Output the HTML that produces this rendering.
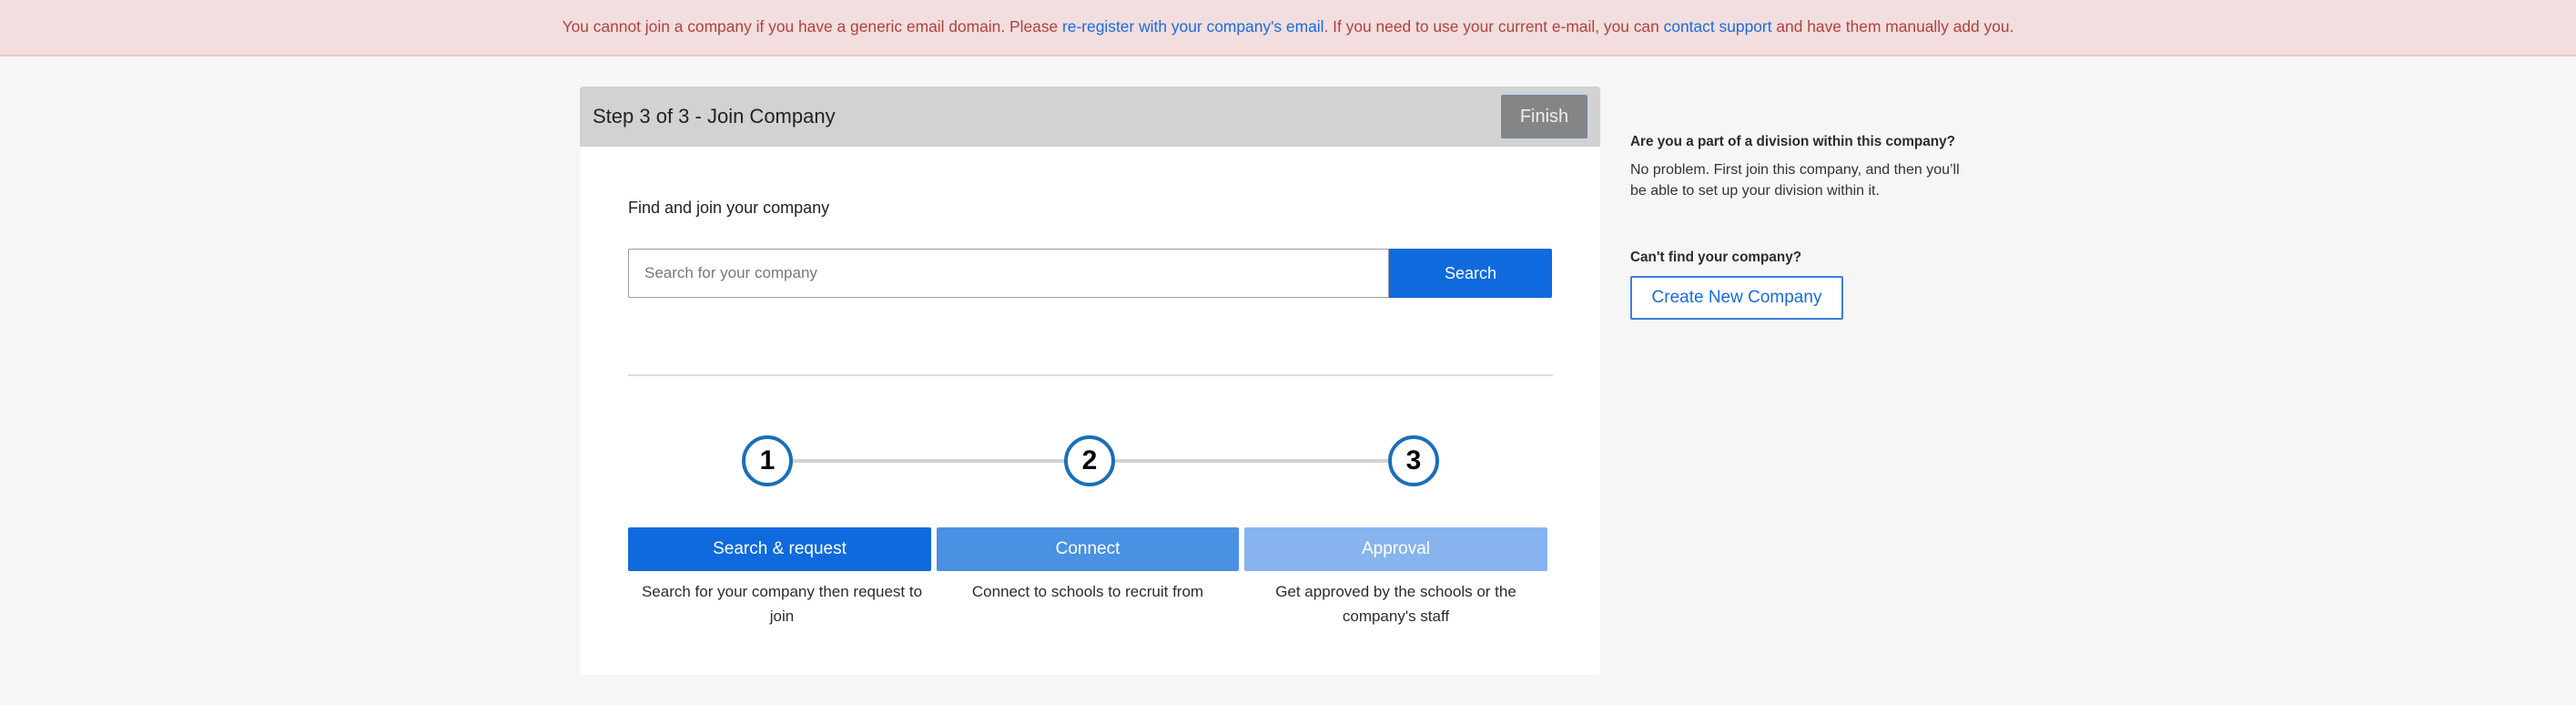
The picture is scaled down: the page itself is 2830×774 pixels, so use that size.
<!DOCTYPE html>
<html><head><meta charset="utf-8"><style>
*{box-sizing:border-box;margin:0;padding:0}
body{width:2830px;height:774px;background:#f6f6f6;font-family:"Liberation Sans",Arial,sans-serif;position:relative;overflow:hidden;color:#2b2b2b}
.banner{position:absolute;left:0;top:0;width:2830px;height:62px;background:#f2dede;border-bottom:2px solid #ebccd1;color:#b0413e;font-size:17.4px;text-align:center;line-height:58px}
.banner a{color:#1a6adf;text-decoration:none}
.card{position:absolute;left:637px;top:95px;width:1121px;height:646px;background:#fff;border-radius:3px;overflow:hidden}
.head{height:66px;background:#d2d2d2;position:relative}
.head .t{position:absolute;left:14px;top:0;line-height:66px;font-size:22px;color:#222}
.finish{position:absolute;left:1012px;top:9px;width:95px;height:48px;background:#858585;border:1px solid #6a88b8;border-radius:2px;color:#eee;font-size:20px;line-height:46px;text-align:center}
.abs{position:absolute}
.circle{position:absolute;width:56px;height:56px;border:4px solid #1a6fb8;border-radius:50%;background:#fff;text-align:center;line-height:48px;font-size:30px;font-weight:bold;color:#000;top:383px}
.btn{position:absolute;top:484px;height:48px;color:#fff;font-size:19px;text-align:center;line-height:48px;border-radius:2px;width:333px}
.desc{position:absolute;top:541px;width:340px;text-align:center;font-size:17px;line-height:27px;color:#2b2b2b}
</style></head><body>
<div class="banner">You cannot join a company if you have a generic email domain. Please <a>re-register with your company's email</a>. If you need to use your current e-mail, you can <a>contact support</a> and have them manually add you.</div>
<div class="card">
 <div class="head"><div class="t">Step 3 of 3 - Join Company</div><div class="finish">Finish</div></div>
 <div class="abs" style="left:53px;top:120px;font-size:18px;line-height:26px;color:#222">Find and join your company</div>
 <div class="abs" style="left:53px;top:178px;width:836px;height:54px;border:1px solid #9a9a9a;border-radius:2px 0 0 2px;font-size:17px;color:#777;line-height:52px;padding-left:17px">Search for your company</div>
 <div class="abs" style="left:889px;top:178px;width:179px;height:54px;background:#0f6ade;border-radius:0 2px 2px 0;color:#fff;font-size:18px;line-height:54px;text-align:center">Search</div>
 <div class="abs" style="left:53px;top:316px;width:1016px;height:2px;background:#dedede"></div>
 <div class="abs" style="left:206px;top:409px;width:710px;height:4px;background:#d3d3d3"></div>
 <div class="circle" style="left:178px">1</div>
 <div class="circle" style="left:532px">2</div>
 <div class="circle" style="left:888px">3</div>
 <div class="btn" style="left:53px;background:#0f6ade">Search &amp; request</div>
 <div class="btn" style="left:392px;background:#4a90e3;width:332px">Connect</div>
 <div class="btn" style="left:730px;background:#87b4ee">Approval</div>
 <div class="desc" style="left:53px;width:338px">Search for your company then request to join</div>
 <div class="desc" style="left:392px;width:332px">Connect to schools to recruit from</div>
 <div class="desc" style="left:730px;width:333px;padding:0 28px">Get approved by the schools or the company's staff</div>
</div>
<div class="abs" style="left:1791px;top:147px;font-size:15.3px;font-weight:bold;color:#2b2b2b">Are you a part of a division within this company?</div>
<div class="abs" style="left:1791px;top:175px;font-size:16px;line-height:23px;color:#333;width:400px">No problem. First join this company, and then you’ll<br>be able to set up your division within it.</div>
<div class="abs" style="left:1791px;top:274px;font-size:15.3px;font-weight:bold;color:#2b2b2b">Can't find your company?</div>
<div class="abs" style="left:1791px;top:303px;width:234px;height:48px;border:2px solid #3b7ddd;border-radius:2px;background:#fff;color:#1a6adf;font-size:19px;line-height:44px;text-align:center">Create New Company</div>
</body></html>
